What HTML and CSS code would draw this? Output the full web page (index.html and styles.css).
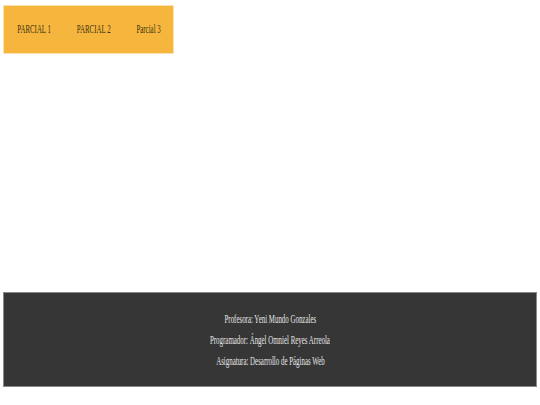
FILE: index.html
```html
<!DOCTYPE html>
<html lang="es">
<head>
<meta charset="utf-8">
<title>Parciales</title>
<link rel="stylesheet" href="styles.css">
</head>
<body>
<div class="page">
  <header class="top">
    <nav class="menu">
      <a class="menu-link" href="#">PARCIAL 1</a>
      <a class="menu-link" href="#">PARCIAL 2</a>
      <a class="menu-link" href="#">Parcial 3</a>
    </nav>
  </header>
  <main class="content"></main>
  <footer class="foot">
    <p class="foot-line">Profesora: Yeni Mundo Gonzales</p>
    <p class="foot-line">Programador: Ángel Omniel Reyes Arreola</p>
    <p class="foot-line">Asignatura: Desarrollo de Páginas Web</p>
  </footer>
</div>
</body>
</html>
```
FILE: styles.css
```css
html, body {
  margin: 0;
  padding: 0;
  background: #ffffff;
}
body {
  font-family: "Liberation Serif", "Times New Roman", serif;
  font-size: 11.5px;
}
.page {
  padding: 5px 3px 0 3px;
  display: flex;
  flex-direction: column;
  align-items: flex-start;
}
.top {
  width: 171px;
  height: 49px;
  background: #f6b63d;
  border: 1px solid #fbe3b0;
  box-sizing: border-box;
  overflow: hidden;
}
.menu {
  display: flex;
  align-items: center;
  height: 100%;
  width: 285px;
  padding: 0 22px;
  gap: 43px;
  box-sizing: border-box;
  transform: scaleX(0.6);
  transform-origin: left center;
}
.menu-link {
  color: #3d3012;
  text-decoration: none;
  white-space: nowrap;
  line-height: 1;
}
.content {
  height: 238px;
}
.foot {
  align-self: stretch;
  height: 95px;
  box-sizing: border-box;
  background: #363636;
  border: 1px solid #8a8a8a;
  display: flex;
  flex-direction: column;
  align-items: center;
  justify-content: center;
  gap: 7px;
}
.foot-line {
  margin: 0;
  color: #e6e6e6;
  line-height: 14px;
  white-space: nowrap;
  transform: scaleX(0.6);
  transform-origin: center;
}
```
